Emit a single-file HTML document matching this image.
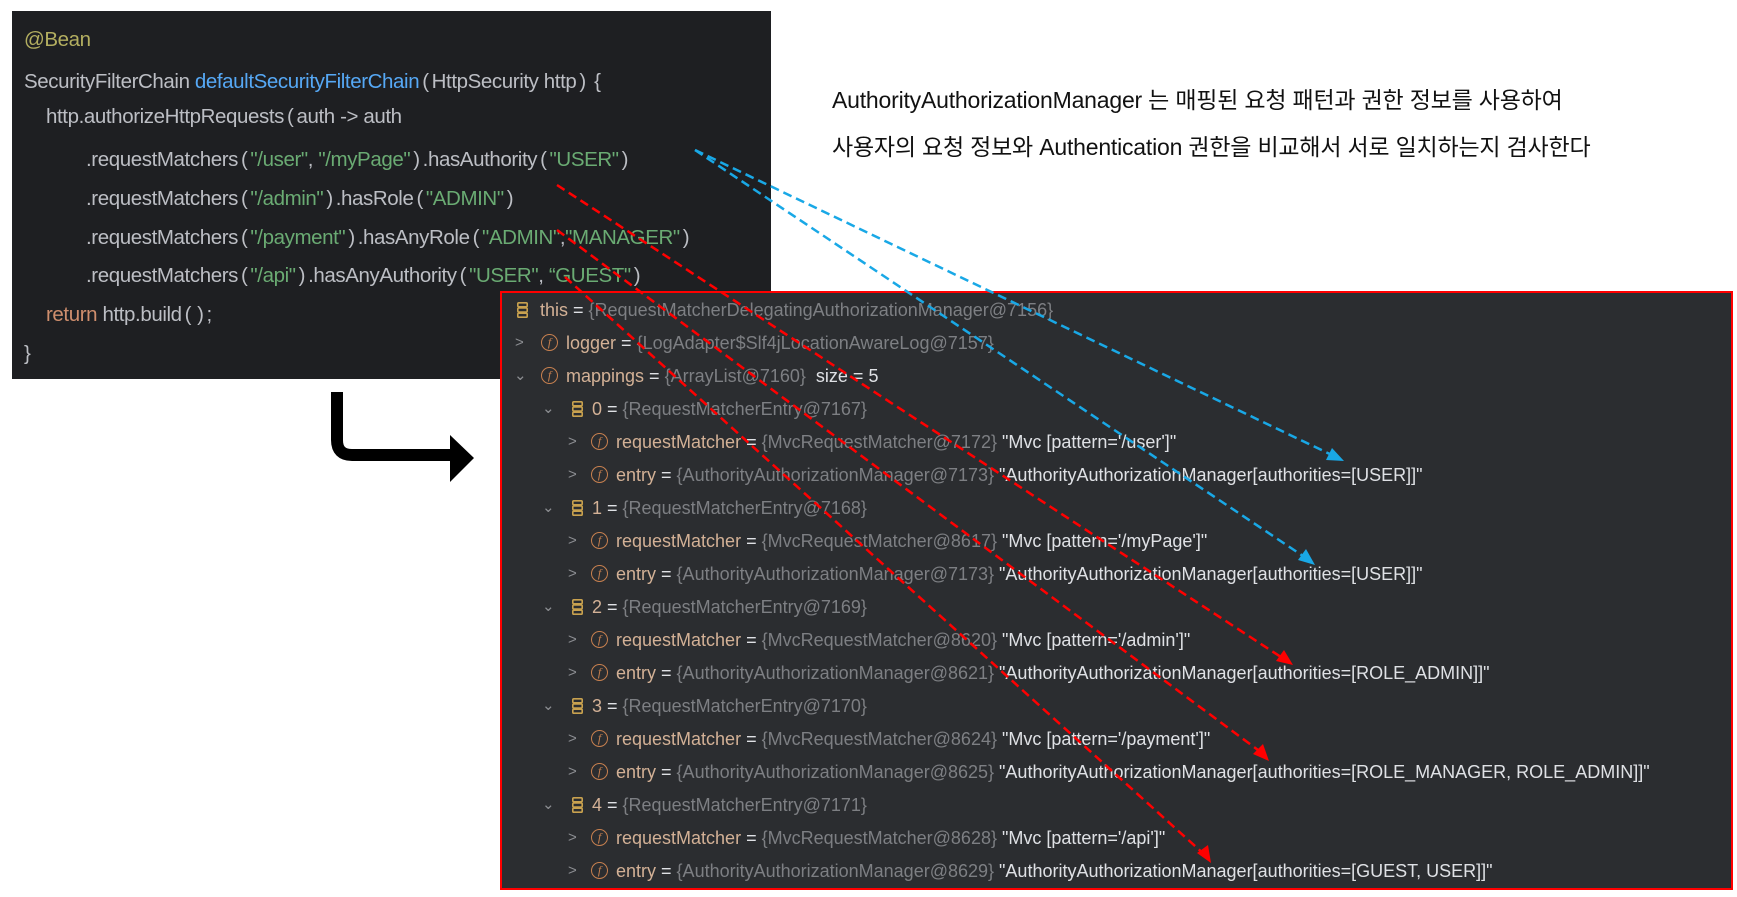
<!DOCTYPE html>
<html><head><meta charset="utf-8">
<style>
html,body{margin:0;padding:0;background:#fff;width:1737px;height:897px;overflow:hidden;position:relative;font-family:"Liberation Sans","Noto Sans CJK KR",sans-serif;}
#code{position:absolute;left:12px;top:11px;width:759px;height:368px;background:#1e1f22;}
.cl{position:absolute;font-size:20.5px;color:#bcbec4;white-space:pre;line-height:24px;letter-spacing:-0.4px;}
.cl i{font-style:normal;margin:0 3px}
.an{color:#b3ae60}.fn{color:#56a8f5}.st{color:#6aab73}.kw{color:#cf8e6d}
#dbg{position:absolute;left:500px;top:291px;width:1229px;height:595px;background:#2b2d30;border:2px solid #ff0000;}
.r{position:absolute;font-size:18px;white-space:pre;line-height:22px;color:#dfe1e5;}
.nm{color:#d3b196}.g{color:#7d7f83}.w{color:#dfe1e5}
.chev{position:absolute;color:#8c8e92;font-size:15px;line-height:22px;}
.f{position:absolute;width:15px;height:15px;border:1.6px solid #c7804f;border-radius:50%;color:#c7804f;font-size:12px;line-height:15px;text-align:center;font-family:"Liberation Serif",serif;font-style:italic}
.stk{position:absolute;width:11px;height:16px;}
.kt{position:absolute;left:832px;font-size:23px;color:#111;white-space:pre;font-family:"Liberation Sans","Noto Sans CJK KR",sans-serif;letter-spacing:-0.2px}
</style></head><body>
<div id="code"></div>
<div class="cl" style="left:24px;top:28px"><span class="an">@Bean</span></div>
<div class="cl" style="left:24px;top:70px">SecurityFilterChain <span class="fn">defaultSecurityFilterChain</span><i>(</i>HttpSecurity http<i>)</i> {</div>
<div class="cl" style="left:46px;top:105px">http.authorizeHttpRequests<i>(</i>auth -&gt; auth</div>
<div class="cl" style="left:86px;top:148px">.requestMatchers<i>(</i><span class="st">"/user"</span>, <span class="st">"/myPage"</span><i>)</i>.hasAuthority<i>(</i><span class="st">"USER"</span><i>)</i></div>
<div class="cl" style="left:86px;top:187px">.requestMatchers<i>(</i><span class="st">"/admin"</span><i>)</i>.hasRole<i>(</i><span class="st">"ADMIN"</span><i>)</i></div>
<div class="cl" style="left:86px;top:226px">.requestMatchers<i>(</i><span class="st">"/payment"</span><i>)</i>.hasAnyRole<i>(</i><span class="st">"ADMIN"</span>,<span class="st">"MANAGER"</span><i>)</i></div>
<div class="cl" style="left:86px;top:264px">.requestMatchers<i>(</i><span class="st">"/api"</span><i>)</i>.hasAnyAuthority<i>(</i><span class="st">"USER"</span>, <span class="st">“GUEST"</span><i>)</i></div>
<div class="cl" style="left:46px;top:303px"><span class="kw">return</span> http.build<i>(</i><i>)</i>;</div>
<div class="cl" style="left:24px;top:342px">}</div>

<div class="kt" style="top:81px">AuthorityAuthorizationManager 는 매핑된 요청 패턴과 권한 정보를 사용하여</div>
<div class="kt" style="top:128px">사용자의 요청 정보와 Authentication 권한을 비교해서 서로 일치하는지 검사한다</div>

<svg style="position:absolute;left:0;top:0" width="1737" height="897">
<path d="M337 392 V440 Q337 455 352 455 H452" fill="none" stroke="#000" stroke-width="12"/>
<polygon points="450,435 474,458 450,482" fill="#000"/>
</svg>

<div id="dbg"></div>
<svg class="stk" style="left:517px;top:302px" viewBox="0 0 11 16"><rect x="0.8" y="0.8" width="9.4" height="4" rx="1" fill="none" stroke="#c9a24f" stroke-width="1.6"/><rect x="0.8" y="6" width="9.4" height="4" rx="1" fill="none" stroke="#c9a24f" stroke-width="1.6"/><rect x="0.8" y="11.2" width="9.4" height="4" rx="1" fill="none" stroke="#c9a24f" stroke-width="1.6"/></svg>
<div class="r" style="left:540px;top:299px"><span class="nm">this</span> = <span class="g">{RequestMatcherDelegatingAuthorizationManager@7156}</span></div>
<div class="chev" style="left:515px;top:332px">&gt;</div>
<div class="f" style="left:541px;top:334px">f</div>
<div class="r" style="left:566px;top:332px"><span class="nm">logger</span> = <span class="g">{LogAdapter$Slf4jLocationAwareLog@7157}</span></div>
<div class="chev" style="left:514px;top:365px">&#8964;</div>
<div class="f" style="left:541px;top:367px">f</div>
<div class="r" style="left:566px;top:365px"><span class="nm">mappings</span> = <span class="g">{ArrayList@7160}</span>  size = 5</div>

<div id="rows"></div>
<script>
var data=[
["7167","7172","/user","7173","USER"],
["7168","8617","/myPage","7173","USER"],
["7169","8620","/admin","8621","ROLE_ADMIN"],
["7170","8624","/payment","8625","ROLE_MANAGER, ROLE_ADMIN"],
["7171","8628","/api","8629","GUEST, USER"]];
var h="";
var stk='<svg viewBox="0 0 11 16" width="11" height="16"><rect x="0.8" y="0.8" width="9.4" height="4" rx="1" fill="none" stroke="#c9a24f" stroke-width="1.6"/><rect x="0.8" y="6" width="9.4" height="4" rx="1" fill="none" stroke="#c9a24f" stroke-width="1.6"/><rect x="0.8" y="11.2" width="9.4" height="4" rx="1" fill="none" stroke="#c9a24f" stroke-width="1.6"/></svg>';
for(var i=0;i<5;i++){
 var y=409+i*99,d=data[i];
 h+='<div class="chev" style="left:542px;top:'+(y-11)+'px">&#8964;</div>';
 h+='<div class="stk" style="left:572px;top:'+(y-8)+'px">'+stk+'</div>';
 h+='<div class="r" style="left:592px;top:'+(y-11)+'px"><span class="nm">'+i+'</span> = <span class="g">{RequestMatcherEntry@'+d[0]+'}</span></div>';
 var y2=y+33;
 h+='<div class="chev" style="left:568px;top:'+(y2-11)+'px">&gt;</div>';
 h+='<div class="f" style="left:591px;top:'+(y2-9)+'px">f</div>';
 h+='<div class="r" style="left:616px;top:'+(y2-11)+'px"><span class="nm">requestMatcher</span> = <span class="g">{MvcRequestMatcher@'+d[1]+'}</span> "Mvc [pattern=\''+d[2]+'\']"</div>';
 var y3=y+66;
 h+='<div class="chev" style="left:568px;top:'+(y3-11)+'px">&gt;</div>';
 h+='<div class="f" style="left:591px;top:'+(y3-9)+'px">f</div>';
 h+='<div class="r" style="left:616px;top:'+(y3-11)+'px"><span class="nm">entry</span> = <span class="g">{AuthorityAuthorizationManager@'+d[3]+'}</span> "AuthorityAuthorizationManager[authorities=['+d[4]+']]"</div>';
}
document.getElementById("rows").innerHTML=h;
</script>

<svg style="position:absolute;left:0;top:0" width="1737" height="897">
<g fill="none" stroke-width="2.5" stroke-dasharray="9,5">
<line x1="695" y1="150" x2="1334" y2="456" stroke="#19a8e6"/>
<line x1="695" y1="150" x2="1306" y2="558" stroke="#19a8e6"/>
<line x1="557" y1="185" x2="1284" y2="659" stroke="#ff0000"/>
<line x1="557" y1="230" x2="1262" y2="753" stroke="#ff0000"/>
<line x1="565" y1="277" x2="1205" y2="855" stroke="#ff0000"/>
</g>
<polygon points="1344,461 1326,460 1332,448" fill="#19a8e6"/>
<polygon points="1315,565 1298,560 1306,549" fill="#19a8e6"/>
<polygon points="1293,665 1276,661 1284,650" fill="#ff0000"/>
<polygon points="1269,761 1253,754 1263,744" fill="#ff0000"/>
<polygon points="1211,863 1197,853 1208,845" fill="#ff0000"/>
</svg>
</body></html>
